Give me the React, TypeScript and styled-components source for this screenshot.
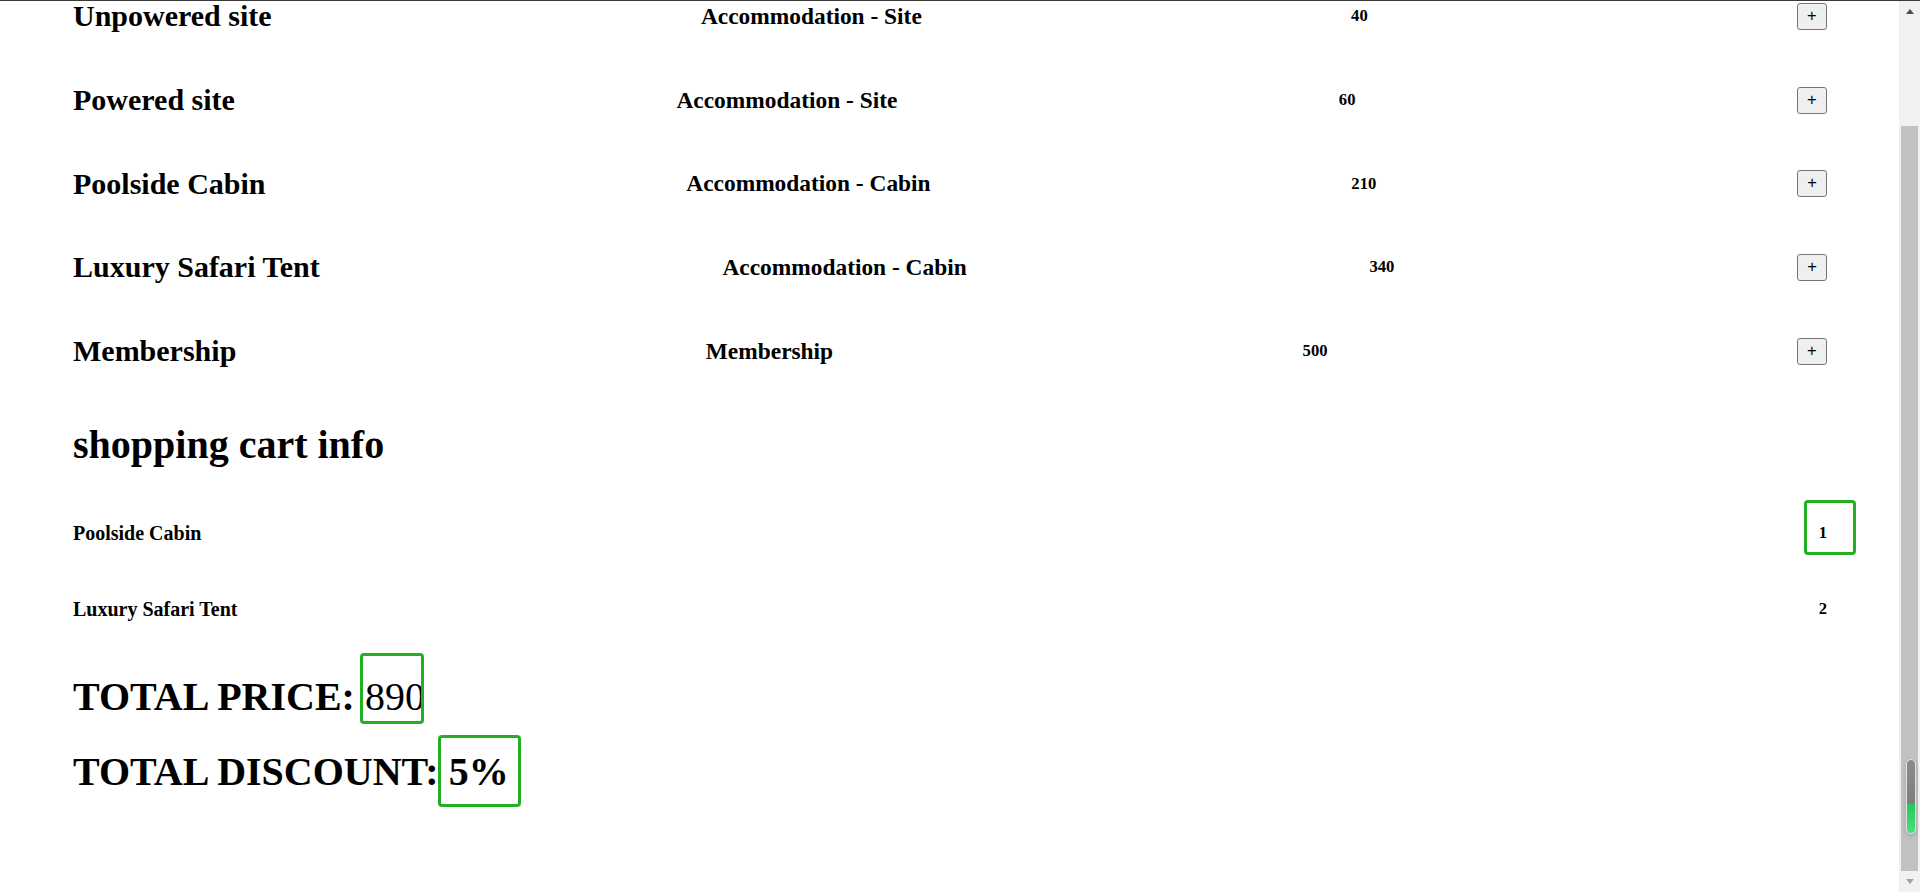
import React from 'react';
import styled, { createGlobalStyle, css } from 'styled-components';

const GlobalStyle = createGlobalStyle`
  html, body {
    margin: 0;
    padding: 0;
    height: 100%;
    overflow: hidden;
    background: #fff;
  }
  body {
    font-family: "Liberation Serif", "Times New Roman", serif;
    color: #000;
  }
  #root {
    height: 100%;
  }
`;

type Mark = { top: number; right: number; bottom: number; left: number };

// green highlight frame drawn over a value
const markCss = css<{ $mark?: Mark }>`
  position: relative;
  ${({ $mark }) =>
    $mark &&
    css`
      &::after {
        content: '';
        position: absolute;
        top: ${-$mark.top}px;
        right: ${-$mark.right}px;
        bottom: ${-$mark.bottom}px;
        left: ${-$mark.left}px;
        border: 3px solid #22b022;
        border-radius: 4px;
        pointer-events: none;
      }
    `}
`;

const Frame = styled.div`
  display: flex;
  height: 100vh;
  box-sizing: border-box;
  border-top: 1px solid #3a3a3a;
`;

const Page = styled.main`
  flex: 1;
  min-width: 0;
  overflow: hidden;
  padding: 0 72px 0 73px;
`;

// list is scrolled: first row sits partly above the top edge
const ProductList = styled.section`
  margin-top: -26.5px;
`;

const ProductRow = styled.div`
  display: flex;
  justify-content: space-between;
  align-items: center;
`;

const ProductName = styled.h2`
  margin: 24.85px 0;
  font-size: 30px;
  font-weight: bold;
`;

const ProductCategory = styled.h3`
  margin: 23.4px 0;
  font-size: 23.4px;
  font-weight: bold;
`;

const ProductPrice = styled.h5`
  margin: 27.7px 0;
  font-size: 16.6px;
  font-weight: bold;
`;

const AddButton = styled.button`
  width: 30px;
  height: 27px;
  padding: 0;
  border: 1px solid #767676;
  border-radius: 3px;
  background: #efefef;
  color: #000;
  font-family: "Liberation Sans", Arial, sans-serif;
  font-size: 16.6px;
  line-height: 1;
  cursor: pointer;
`;

const CartTitle = styled.h1`
  margin: 27.8px 0 27.3px;
  font-size: 40px;
  font-weight: bold;
`;

const CartRow = styled.div`
  display: flex;
  justify-content: space-between;
  align-items: center;
`;

const CartName = styled.h4`
  margin: 26.6px 0;
  font-size: 20px;
  font-weight: bold;
`;

const CartQty = styled.h5<{ $mark?: Mark }>`
  margin: 27.7px 0;
  font-size: 16.6px;
  font-weight: bold;
  ${markCss}
`;

const Total = styled.h1`
  margin: 26px 0 27.4px;
  font-size: 40px;
  font-weight: bold;
`;

const TotalValue = styled.span<{ $mark?: Mark; $bold?: boolean }>`
  font-weight: ${({ $bold }) => ($bold ? 'bold' : 'normal')};
  ${markCss}
`;

const Scrollbar = styled.aside`
  width: 21px;
  flex-shrink: 0;
  display: flex;
  flex-direction: column;
  background: #f1f1f1;
`;

const ArrowCell = styled.div<{ $size: number }>`
  height: ${({ $size }) => $size}px;
  display: flex;
  align-items: center;
  justify-content: center;
`;

const Arrow = styled.span<{ $up?: boolean; $color: string }>`
  width: 0;
  height: 0;
  border-left: 4.5px solid transparent;
  border-right: 4.5px solid transparent;
  ${({ $up, $color }) =>
    $up ? `border-bottom: 5px solid ${$color};` : `border-top: 5px solid ${$color};`}
`;

const TrackGap = styled.div`
  height: 105px;
`;

const Thumb = styled.div`
  flex: 1;
  margin: 0 2px;
  background: #c1c1c1;
  position: relative;
`;

const Pill = styled.div`
  position: absolute;
  left: 5px;
  bottom: 37px;
  width: 10px;
  height: 75px;
  box-sizing: border-box;
  border: 1px solid #e2e2e2;
  border-radius: 6px;
  background: linear-gradient(
    to bottom,
    #8c8c8c 0%,
    #7d7d7d 60%,
    #27c95a 61%,
    #45e277 100%
  );
  box-shadow: 0 2px 4px rgba(0, 0, 0, 0.15);
`;

const products = [
  { name: 'Unpowered site', category: 'Accommodation - Site', price: 40 },
  { name: 'Powered site', category: 'Accommodation - Site', price: 60 },
  { name: 'Poolside Cabin', category: 'Accommodation - Cabin', price: 210 },
  { name: 'Luxury Safari Tent', category: 'Accommodation - Cabin', price: 340 },
  { name: 'Membership', category: 'Membership', price: 500 },
];

const cart = [
  { name: 'Poolside Cabin', qty: 1 },
  { name: 'Luxury Safari Tent', qty: 2 },
];

const App = () => {
  const total = cart.reduce(
    (sum, item) => sum + (products.find((p) => p.name === item.name)?.price ?? 0) * item.qty,
    0
  );

  return (
    <>
      <GlobalStyle />
      <Frame>
        <Page>
          <ProductList>
            {products.map((p) => (
              <ProductRow key={p.name}>
                <ProductName>{p.name}</ProductName>
                <ProductCategory>{p.category}</ProductCategory>
                <ProductPrice>{p.price}</ProductPrice>
                <AddButton type="button">+</AddButton>
              </ProductRow>
            ))}
          </ProductList>

          <CartTitle>shopping cart info</CartTitle>
          {cart.map((item, i) => (
            <CartRow key={item.name}>
              <CartName>{item.name}</CartName>
              <CartQty $mark={i === 0 ? { top: 23, right: 29, bottom: 12, left: 14.5 } : undefined}>
                {item.qty}
              </CartQty>
            </CartRow>
          ))}

          <Total>
            TOTAL PRICE:{' '}
            <TotalValue $mark={{ top: 21.4, right: -1, bottom: 4.7, left: 5.4 }}>{total}</TotalValue>
          </Total>
          <Total>
            TOTAL DISCOUNT:{' '}
            <TotalValue $bold $mark={{ top: 13.7, right: 12.4, bottom: 12.8, left: 10.6 }}>
              5%
            </TotalValue>
          </Total>
        </Page>

        <Scrollbar>
          <ArrowCell $size={20}>
            <Arrow $up $color="#505050" />
          </ArrowCell>
          <TrackGap />
          <Thumb>
            <Pill />
          </Thumb>
          <ArrowCell $size={21}>
            <Arrow $color="#a3a3a3" />
          </ArrowCell>
        </Scrollbar>
      </Frame>
    </>
  );
};

export default App;
